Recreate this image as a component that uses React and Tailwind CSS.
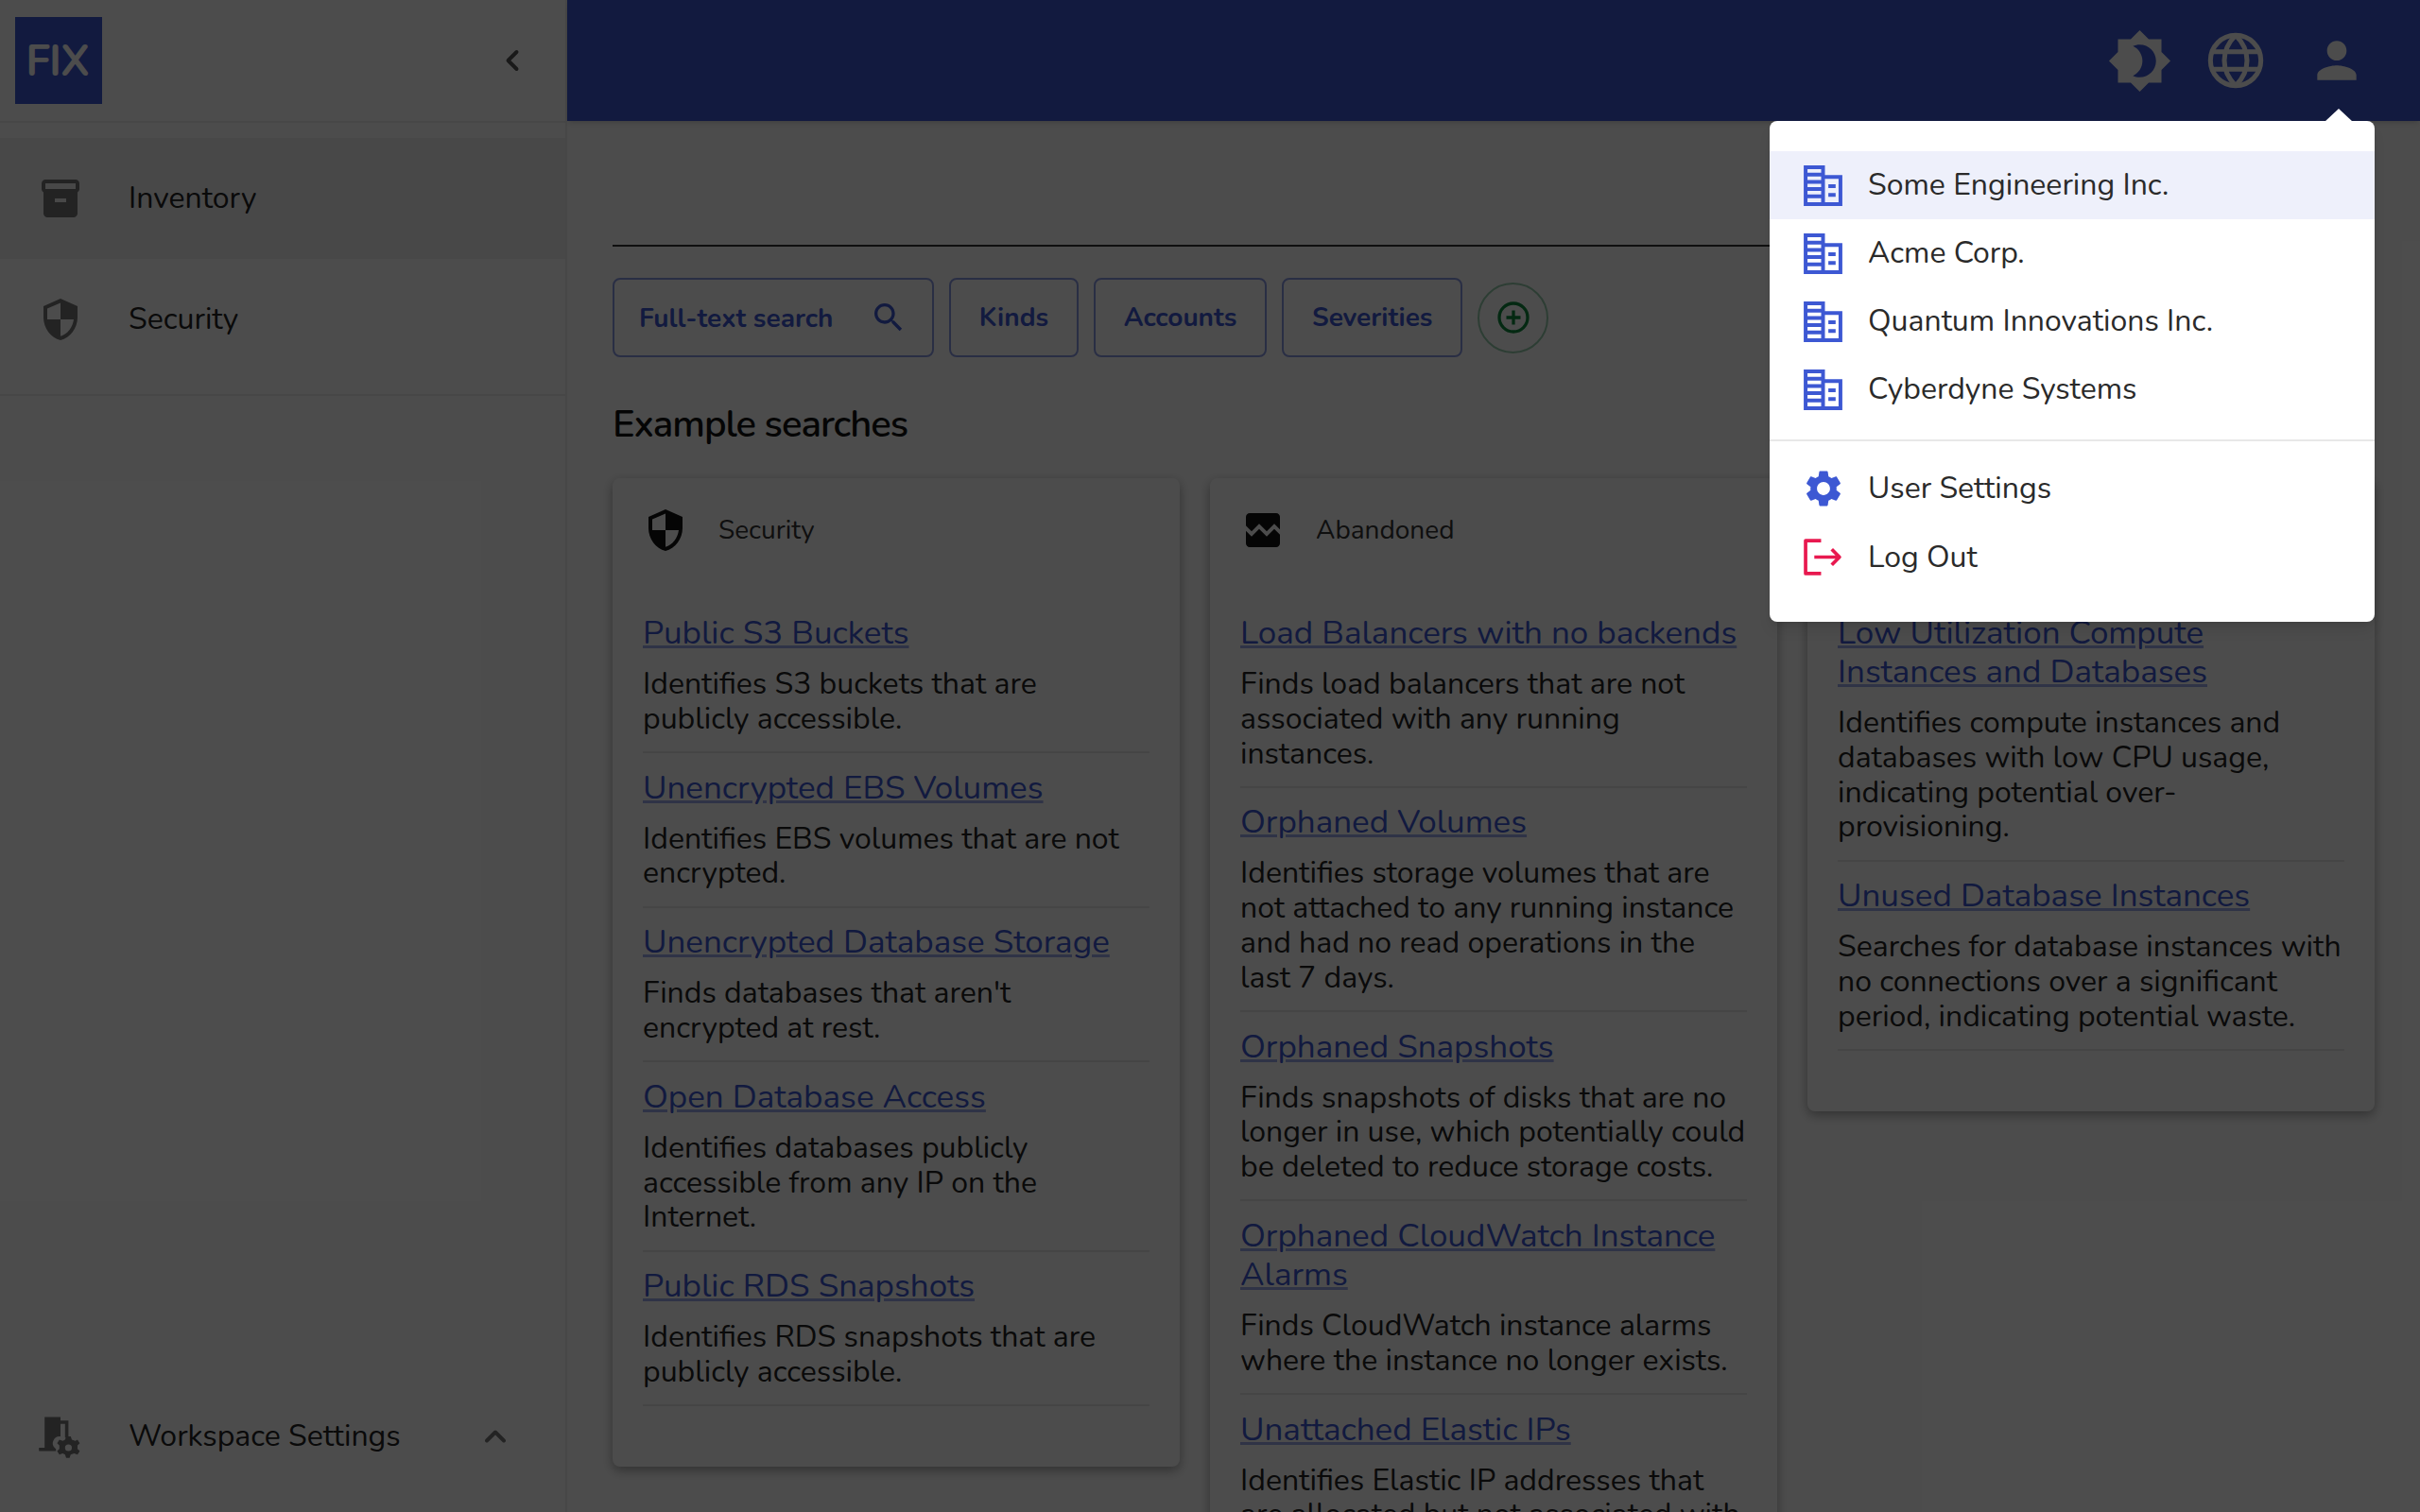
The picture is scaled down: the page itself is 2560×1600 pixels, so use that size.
import React from 'react';
import { ChevronLeft, ChevronUp } from 'lucide-react';

const font = 'font-["Nunito","Lato",sans-serif]';

const columns = [
  {
    title: 'Security',
    icon: 'shield',
    items: [
      ['Public S3 Buckets', 'Identifies S3 buckets that are publicly accessible.'],
      ['Unencrypted EBS Volumes', 'Identifies EBS volumes that are not encrypted.'],
      ['Unencrypted Database Storage', "Finds databases that aren't encrypted at rest."],
      ['Open Database Access', 'Identifies databases publicly accessible from any IP on the Internet.'],
      ['Public RDS Snapshots', 'Identifies RDS snapshots that are publicly accessible.'],
    ],
  },
  {
    title: 'Abandoned',
    icon: 'abandoned',
    items: [
      ['Load Balancers with no backends', 'Finds load balancers that are not associated with any running instances.'],
      ['Orphaned Volumes', 'Identifies storage volumes that are not attached to any running instance and had no read operations in the last 7 days.'],
      ['Orphaned Snapshots', 'Finds snapshots of disks that are no longer in use, which potentially could be deleted to reduce storage costs.'],
      ['Orphaned CloudWatch Instance Alarms', 'Finds CloudWatch instance alarms where the instance no longer exists.'],
      ['Unattached Elastic IPs', 'Identifies Elastic IP addresses that are allocated but not associated with any instance.'],
    ],
  },
  {
    title: 'Cost',
    icon: 'shield',
    items: [
      ['Low Utilization Compute Instances and Databases', 'Identifies compute instances and databases with low CPU usage, indicating potential over-provisioning.'],
      ['Unused Database Instances', 'Searches for database instances with no connections over a significant period, indicating potential waste.'],
    ],
  },
];

const orgs = ['Some Engineering Inc.', 'Acme Corp.', 'Quantum Innovations Inc.', 'Cyberdyne Systems'];

function ShieldIcon({ className }) {
  return (
    <svg viewBox="0 0 24 24" className={className} fill="currentColor">
      <path d="M12 1 3 5v6c0 5.55 3.84 10.74 9 12 5.16-1.26 9-6.45 9-12V5l-9-4zm0 10.99h7c-.53 4.12-3.28 7.79-7 8.94V12H5V6.3l7-3.11v8.8z" />
    </svg>
  );
}

function ArchiveIcon({ className }) {
  return (
    <svg viewBox="0 0 24 24" className={className} fill="currentColor">
      <path d="M20 2H4c-1 0-2 .9-2 2v3.01c0 .72.43 1.34 1 1.69V20c0 1.1 1.1 2 2 2h14c.9 0 2-.9 2-2V8.7c.57-.35 1-.97 1-1.69V4c0-1.1-1-2-2-2zm-5 12H9v-2h6v2zm5-7H4V4h16v3z" />
    </svg>
  );
}

function AbandonedIcon({ className }) {
  return (
    <svg viewBox="0 0 24 24" className={className} fill="currentColor">
      <path d="M21 5v6.59l-3-3.01-4 4.01-4-4-4 4-3-3.01V5c0-1.1.9-2 2-2h14c1.1 0 2 .9 2 2zm-3 6.42 3 3.01V19c0 1.1-.9 2-2 2H5c-1.1 0-2-.9-2-2v-6.58l3 2.99 4-4 4 4 4-3.99z" />
    </svg>
  );
}

function BuildingIcon({ className }) {
  return (
    <svg viewBox="0 0 40 42" className={className} fill="none" stroke="currentColor" strokeWidth="3.9">
      <path d="M2 2h18v38H2zM20 12h18v28H20zM2 9.5h18M2 17h18M2 24.5h18M2 32h18M25.5 21.5h7.5M25.5 30.5h7.5" />
    </svg>
  );
}

function GearIcon({ className }) {
  return (
    <svg viewBox="0 0 24 24" className={className} fill="currentColor">
      <path d="M19.14 12.94c.04-.3.06-.61.06-.94 0-.32-.02-.64-.07-.94l2.03-1.58c.18-.14.23-.41.12-.61l-1.92-3.32c-.12-.22-.37-.29-.59-.22l-2.39.96c-.5-.38-1.03-.7-1.62-.94l-.36-2.54c-.04-.24-.24-.41-.48-.41h-3.84c-.24 0-.43.17-.47.41l-.36 2.54c-.59.24-1.13.57-1.62.94l-2.39-.96c-.22-.08-.47 0-.59.22L2.74 8.87c-.12.21-.08.47.12.61l2.03 1.58c-.05.3-.09.63-.09.94s.02.64.07.94l-2.03 1.58c-.18.14-.23.41-.12.61l1.92 3.32c.12.22.37.29.59.22l2.39-.96c.5.38 1.03.7 1.62.94l.36 2.54c.05.24.24.41.48.41h3.84c.24 0 .44-.17.47-.41l.36-2.54c.59-.24 1.13-.56 1.62-.94l2.39.96c.22.08.47 0 .59-.22l1.92-3.32c.12-.22.07-.47-.12-.61l-2.01-1.58zM12 15.6c-1.98 0-3.6-1.62-3.6-3.6s1.62-3.6 3.6-3.6 3.6 1.62 3.6 3.6-1.62 3.6-3.6 3.6z" />
    </svg>
  );
}

function LogoutIcon({ className }) {
  return (
    <svg viewBox="0 0 40 40" className={className} fill="none" stroke="currentColor" strokeWidth="3.6" strokeLinejoin="round">
      <path d="M18 3H2v34h16M11 20h26M29 12l8 8-8 8" />
    </svg>
  );
}

function SearchIcon({ className }) {
  return (
    <svg viewBox="0 0 24 24" className={className} fill="currentColor">
      <path d="M15.5 14h-.79l-.28-.27C15.41 12.59 16 11.11 16 9.5 16 5.91 13.09 3 9.5 3S3 5.91 3 9.5 5.91 16 9.5 16c1.61 0 3.09-.59 4.23-1.57l.27.28v.79l5 4.99L20.49 19l-4.99-5zm-6 0C7.01 14 5 11.99 5 9.5S7.01 5 9.5 5 14 7.01 14 9.5 11.99 14 9.5 14z" />
    </svg>
  );
}

function ThemeIcon({ className }) {
  return (
    <svg viewBox="0 0 24 24" className={className} fill="currentColor">
      <path d="M20 8.69V4h-4.69L12 .69 8.69 4H4v4.69L.69 12 4 15.31V20h4.69L12 23.31 15.31 20H20v-4.69L23.31 12 20 8.69zM12 18c-.89 0-1.74-.2-2.5-.55C11.56 16.5 13 14.42 13 12s-1.44-4.5-3.5-5.45C10.26 6.2 11.11 6 12 6c3.31 0 6 2.69 6 6s-2.69 6-6 6z" />
    </svg>
  );
}

function GlobeIcon({ className }) {
  return (
    <svg viewBox="0 0 24 24" className={className} fill="none" stroke="currentColor" strokeWidth="1.9">
      <circle cx="12" cy="12" r="10" />
      <path d="M2 8.5h20M2 15.5h20M12 2c-6 6-6 14 0 20M12 2c6 6 6 14 0 20" />
    </svg>
  );
}

function UserIcon({ className }) {
  return (
    <svg viewBox="0 0 24 24" className={className} fill="currentColor">
      <path d="M12 12c2.21 0 4-1.79 4-4s-1.79-4-4-4-4 1.79-4 4 1.79 4 4 4zm0 2c-2.67 0-8 1.34-8 4v2h16v-2c0-2.66-5.33-4-8-4z" />
    </svg>
  );
}

function WorkspaceIcon({ className }) {
  return (
    <svg viewBox="0 0 40 40" className={className} fill="currentColor">
      <path d="M6 3h14v3h7v15h-3V9h-4v11a6 6 0 0 0-4 11v2H1v-3h5z" />
      <path d="M29 20l1 3 3 1 2-1 2 3-2 2v3l2 2-2 3-3-1-3 1-1 3h-3l-1-3-2-1-3 1-2-3 2-2v-3l-2-2 2-3 3 1 2-1 1-3zm-2 7a3 3 0 1 0 0 6 3 3 0 0 0 0-6z" />
    </svg>
  );
}

function PlusCircleIcon({ className }) {
  return (
    <svg viewBox="0 0 24 24" className={className} fill="none" stroke="currentColor" strokeWidth="2.2">
      <circle cx="12" cy="12" r="10" />
      <path d="M12 7v10M7 12h10" />
    </svg>
  );
}

function FilterButton({ children }) {
  return (
    <button className="h-[84px] px-[29.8px] rounded-[8px] border-2 border-[#3d58d3]/60 text-[#3d58d3] text-[28px] font-bold">
      {children}
    </button>
  );
}

function Card({ col }) {
  const Icon = col.icon === 'abandoned' ? AbandonedIcon : ShieldIcon;
  return (
    <div className="w-[600px] shrink-0 rounded-[8px] bg-white shadow-[0_4px_12px_rgba(0,0,0,0.35)] px-[32px] pt-[29px] pb-[48px]">
      <div className="flex items-center h-[52px] mb-[62px]">
        <Icon className="w-[48px] h-[48px] text-[#111]" />
        <span className="ml-[32px] text-[28px] text-[#333]">{col.title}</span>
      </div>
      {col.items.map(([title, desc]) => (
        <div key={title} className="border-b-2 border-[#e8e8e8] pb-[15.5px] mb-[15.5px]">
          <a className="block text-[35px] leading-[41px] text-[#3d58d3] underline decoration-[#3d58d3]/50">{title}</a>
          <p className="mt-[16px] text-[32px] leading-[36.8px] text-[#222]">{desc}</p>
        </div>
      ))}
    </div>
  );
}

export default function App() {
  return (
    <div className={`relative h-[1600px] w-[2560px] overflow-hidden bg-white ${font}`}>
      <div className="flex h-full">
        <aside className="w-[600px] shrink-0 border-r-2 border-[#eee] flex flex-col">
          <div className="h-[130px] shrink-0 border-b-2 border-[#eee] flex items-center justify-between pl-[16px] pr-[38px]">
            <div className="w-[92px] h-[92px] bg-[#3d58d3] flex items-center justify-center text-white text-[46px] tracking-[-1px] font-bold">
              <span className="-ml-[3px]">FIX</span>
            </div>
            <ChevronLeft className="w-[36px] h-[36px] text-[#555]" strokeWidth={2.6} />
          </div>
          <nav className="pt-[16px] pb-[15px] border-b-2 border-[#eee]">
            <div className="h-[128px] bg-[#f0f0f2] flex items-center pl-[40px]">
              <ArchiveIcon className="w-[48px] h-[48px] text-[#777]" />
              <span className="ml-[48px] text-[32px] text-[#222]">Inventory</span>
            </div>
            <div className="h-[128px] flex items-center pl-[40px]">
              <ShieldIcon className="w-[48px] h-[48px] text-[#777]" />
              <span className="ml-[48px] text-[32px] text-[#222]">Security</span>
            </div>
          </nav>
          <div className="mt-auto h-[128px] mb-[16px] flex items-center pl-[40px] pr-[56px]">
            <WorkspaceIcon className="w-[48px] h-[48px] text-[#777]" />
            <span className="ml-[48px] text-[32px] text-[#222]">Workspace Settings</span>
            <ChevronUp className="ml-auto w-[36px] h-[36px] text-[#777]" strokeWidth={2.6} />
          </div>
        </aside>
        <main className="flex-1 min-w-0 flex flex-col">
          <header className="h-[128px] shrink-0 bg-[#3d58d3] shadow-md flex items-center justify-end pr-[57px] text-white">
            <ThemeIcon className="w-[69px] h-[69px]" />
            <GlobeIcon className="ml-[35px] w-[64px] h-[64px]" />
            <UserIcon className="ml-[44px] w-[62px] h-[62px]" />
          </header>
          <div className="px-[48px]">
            <div className="h-[133px] border-b-2 border-[#333]" />
            <div className="mt-[33px] flex items-center gap-[16px]">
              <div className="w-[340px] h-[84px] px-[26px] rounded-[8px] border-2 border-[#3d58d3]/60 text-[#3d58d3] text-[28px] font-bold flex items-center justify-between">
                <span className="mt-[2px]">Full-text search</span>
                <SearchIcon className="w-[40px] h-[40px]" />
              </div>
              <FilterButton>Kinds</FilterButton>
              <FilterButton>Accounts</FilterButton>
              <FilterButton>Severities</FilterButton>
              <div className="w-[75px] h-[75px] rounded-full border-2 border-[#2e9e5b]/50 flex items-center justify-center text-[#0e8a3f]">
                <PlusCircleIcon className="w-[36px] h-[36px]" />
              </div>
            </div>
            <h2 className="mt-[43px] text-[40px] leading-[56px] font-semibold tracking-[-1px] text-[#111]">Example searches</h2>
            <div className="mt-[29px] flex gap-[32px] items-start">
              {columns.map(col => <Card key={col.title} col={col} />)}
            </div>
          </div>
        </main>
      </div>

      {/* modal backdrop */}
      <div className="absolute inset-0 bg-black/70" />

      <div className="absolute left-[1872px] top-[128px] w-[640px] h-[530px] rounded-[8px] bg-white shadow-lg pt-[32px]">
        <div className="absolute -top-[13px] left-[587px] w-0 h-0 border-x-[15px] border-x-transparent border-b-[14px] border-b-white" />
        {orgs.map((name, i) => (
          <div key={name} className={`h-[72px] flex items-center pl-[36px] ${i === 0 ? 'bg-[#eef0fb]' : ''}`}>
            <BuildingIcon className="w-[41px] h-[43px] text-[#3d58d3]" />
            <span className="ml-[27px] text-[32px] text-[#2a2a2a]">{name}</span>
          </div>
        ))}
        <div className="mt-[17px] mb-[14px] h-[2px] bg-[#e8e8e8]" />
        <div className="h-[72px] flex items-center pl-[36px]">
          <GearIcon className="w-[46px] h-[46px] -mx-[2px] text-[#3d58d3]" />
          <span className="ml-[26px] text-[32px] text-[#2a2a2a]">User Settings</span>
        </div>
        <div className="h-[73px] flex items-center pl-[36px]">
          <LogoutIcon className="w-[41px] h-[41px] text-[#e8194f]" />
          <span className="ml-[27px] text-[32px] text-[#2a2a2a]">Log Out</span>
        </div>
      </div>
    </div>
  );
}
